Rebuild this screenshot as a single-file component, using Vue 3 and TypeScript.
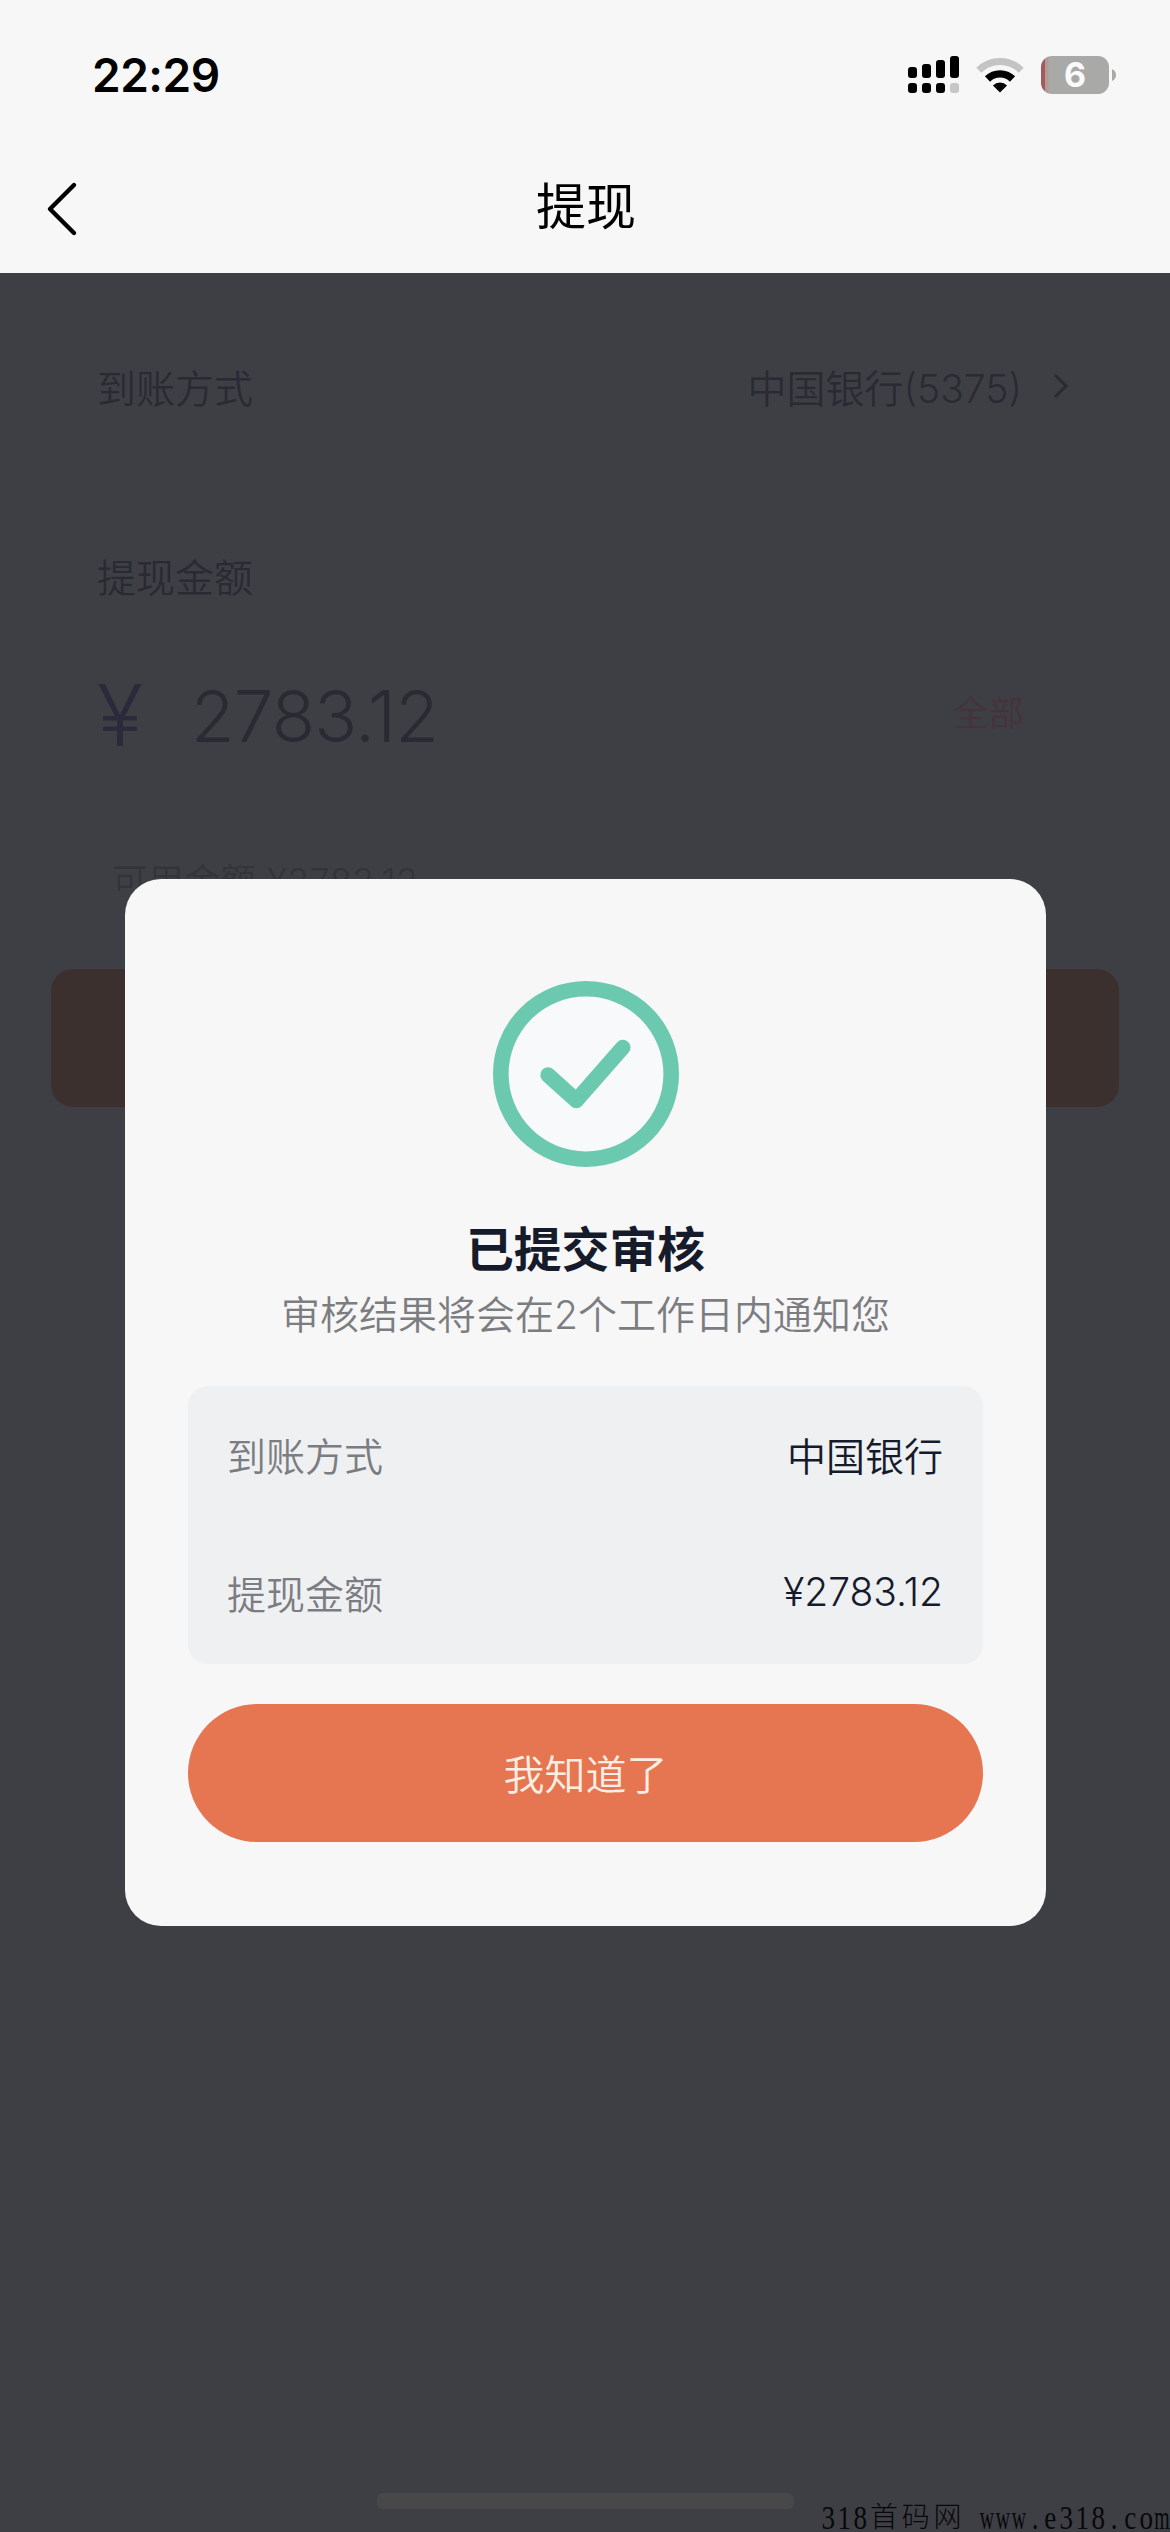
<script setup lang="ts">
interface DetailRow {
  label: string
  value: string
}

const amount = '2783.12'

const details: DetailRow[] = [
  { label: '到账方式', value: '中国银行' },
  { label: '提现金额', value: `¥${amount}` },
]

const signalBars = [
  { x: 0, y: 11, h: 11 },
  { x: 14, y: 8, h: 14 },
  { x: 28, y: 4, h: 18 },
  { x: 42, y: 0, h: 22 },
]

const watermark = [...'318首码网 www.e318.com'].map((ch) => ({
  ch: ch === ' ' ? '\u00a0' : ch,
  full: ch.charCodeAt(0) > 255,
  wide: ch === 'w' || ch === 'm',
}))
</script>

<template>
  <div class="screen">
    <header class="top">
      <div class="status">
        <span class="time">22:29</span>
        <div class="status-icons">
          <svg class="signal" width="51" height="37" viewBox="0 0 51 37">
            <rect v-for="b in signalBars" :key="b.x" :x="b.x" :y="b.y" width="9" :height="b.h" rx="3" />
            <rect
              v-for="b in signalBars"
              :key="'d' + b.x"
              :x="b.x"
              y="27"
              width="9"
              height="10"
              rx="3"
              :fill="b.x === 42 ? '#c6c6c6' : '#000'"
            />
          </svg>
          <svg class="wifi" width="48" height="36" viewBox="0 0 48 36">
            <path d="M2.8 13.2 A30 30 0 0 1 45.2 13.2" fill="none" stroke="#c4c4c4" stroke-width="7" />
            <path d="M11.5 22 A17.8 17.8 0 0 1 36.5 22" fill="none" stroke="#000" stroke-width="7.4" />
            <path d="M24 35.4 L16.9 28.4 A10 10 0 0 1 31.1 28.4 Z" />
          </svg>
          <div class="battery">
            <div class="cell"><span>6</span></div>
            <svg width="4" height="12" viewBox="0 0 4 12"><path d="M0 0 Q4 2 4 6 Q4 10 0 12 Z" fill="#a9a9a9" /></svg>
          </div>
        </div>
      </div>
      <nav class="nav">
        <svg class="back" width="32" height="56" viewBox="0 0 32 56">
          <path d="M28 4 L4 28 L28 52" fill="none" stroke="#000" stroke-width="4.4" stroke-linecap="round" stroke-linejoin="round" />
        </svg>
        <h1>提现</h1>
      </nav>
    </header>

    <main class="form">
      <div class="line method">
        <span>到账方式</span>
        <span class="bank">中国银行(5375)</span>
        <svg width="16" height="28" viewBox="0 0 16 28">
          <path d="M2 3 L13 14 L2 25" fill="none" stroke="#2a2a34" stroke-width="3" />
        </svg>
      </div>
      <div class="line caption">提现金额</div>
      <div class="line sum">
        <span class="yen">¥</span>
        <span class="figure">{{ amount }}</span>
        <span class="all">全部</span>
      </div>
      <div class="line available">可用金额 ¥2783.12</div>
      <div class="submit"></div>
    </main>

    <div class="home-bar"></div>

    <section class="dialog">
      <svg class="done" width="186" height="186" viewBox="0 0 186 186">
        <circle cx="93" cy="93" r="85.2" fill="#f8f9fa" stroke="#6bc9b0" stroke-width="15.6" />
        <path d="M55 94 L83.3 119.5 L129.8 66.5" fill="none" stroke="#6bc9b0" stroke-width="15.4" stroke-linecap="round" stroke-linejoin="round" />
      </svg>
      <h2>已提交审核</h2>
      <p class="hint">审核结果将会在2个工作日内通知您</p>
      <div class="panel">
        <div v-for="row in details" :key="row.label" class="row">
          <span class="label">{{ row.label }}</span>
          <span class="value">{{ row.value }}</span>
        </div>
      </div>
      <button type="button">我知道了</button>
    </section>

    <div class="watermark">
      <span v-for="(c, i) in watermark" :key="i" :class="{ full: c.full, wide: c.wide }"><i>{{ c.ch }}</i></span>
    </div>
  </div>
</template>

<style>
body {
  margin: 0;
  background: #3e3f44;
}
</style>

<style scoped>
.screen {
  position: relative;
  display: flex;
  flex-direction: column;
  width: 1170px;
  height: 2532px;
  overflow: hidden;
  background: #3e3f44;
  font-family: Inter, "Noto Sans CJK SC", sans-serif;
  font-size: 39px;
  font-weight: 350;
}

.top {
  height: 273px;
  background: #f7f7f7;
  color: #000;
}

.status {
  display: flex;
  align-items: center;
  justify-content: space-between;
  box-sizing: border-box;
  height: 141px;
  padding: 8px 54px 0 92px;
}

.time {
  font-size: 46px;
  font-weight: 600;
  line-height: 58px;
  letter-spacing: -0.5px;
}

.status-icons {
  display: flex;
  align-items: center;
}

.wifi {
  margin-left: 17px;
}

.battery {
  display: flex;
  align-items: center;
  gap: 3px;
  margin-left: 17px;
}

.cell {
  width: 68px;
  height: 38px;
  border-radius: 11px;
  background: linear-gradient(90deg, #a35a5c 0 4px, #b39a98 4px 7px, #a9aaa7 8px);
  color: #fafafa;
  font-size: 34px;
  font-weight: 700;
  line-height: 38px;
  text-align: center;
}

.nav {
  display: grid;
  grid-template-columns: 120px 1fr 120px;
  align-items: center;
  height: 132px;
}

.back {
  margin: 3px 0 0 46px;
}

h1 {
  margin: 0;
  padding-left: 2px;
  font-size: 50px;
  font-weight: 400;
  line-height: 60px;
  text-align: center;
}

.form {
  display: flex;
  flex-direction: column;
  color: #2a2a35;
}

.line {
  display: flex;
  align-items: center;
  padding: 0 97px;
  white-space: nowrap;
}

.method {
  height: 60px;
  margin-top: 83px;
}

.bank {
  margin-left: auto;
}

.method svg {
  margin: 0 4px 0 31px;
}

.caption {
  height: 60px;
  margin-top: 129px;
}

.sum {
  height: 80px;
  margin-top: 71px;
}

.yen {
  width: 94px;
  color: #2a2a3a;
  font-size: 85px;
  line-height: 80px;
  letter-spacing: 0;
}

.figure {
  font-size: 71px;
  letter-spacing: -0.8px;
}

.all {
  margin: -12px 49px 0 auto;
  color: #46333a;
  font-size: 35.5px;
}

.available {
  height: 40px;
  margin-top: 102px;
  padding-left: 112px;
  color: #33333a;
  font-size: 35.5px;
  letter-spacing: 0.7px;
}

.submit {
  height: 138px;
  margin: 71px 51px 0;
  border-radius: 22px;
  background: #3c302f;
}

.home-bar {
  width: 417px;
  height: 16px;
  margin: auto auto 23px;
  border-radius: 6px;
  background: #48484b;
}

.dialog {
  position: absolute;
  top: 879px;
  left: 125px;
  display: flex;
  flex-direction: column;
  box-sizing: border-box;
  width: 921px;
  height: 1047px;
  padding: 102px 63px 0;
  border-radius: 36px;
  background: #f7f7f7;
}

.done {
  align-self: center;
}

h2 {
  margin: 53px 0 0;
  color: #161b2c;
  font-size: 47.8px;
  font-weight: 600;
  line-height: 60px;
  text-align: center;
}

.hint {
  margin: 10px 0 0;
  color: #7c7d81;
  line-height: 50px;
  text-align: center;
  white-space: nowrap;
}

.panel {
  height: 278px;
  margin-top: 46px;
  border-radius: 20px;
  background: #eff0f2;
}

.row {
  display: flex;
  align-items: center;
  justify-content: space-between;
  height: 138px;
  padding: 0 40px 0 39px;
}

.row span {
  margin-top: -3px;
}

.label {
  color: #7c7d82;
}

.value {
  color: #161b2c;
}

button {
  height: 138px;
  margin: 40px 0 0;
  padding: 0 0 3px;
  border: 0;
  border-radius: 69px;
  background: #e67652;
  color: #fdeee4;
  font: inherit;
  font-size: 41px;
}

.watermark {
  position: absolute;
  right: 0;
  bottom: 0;
  display: flex;
  color: #08080a;
  font-family: "Liberation Serif", "Noto Sans CJK SC", serif;
  font-size: 33px;
  line-height: 28px;
}

.watermark span {
  display: flex;
  justify-content: center;
  width: 15.9px;
}

.watermark i {
  font-style: normal;
  transform: scaleX(0.82);
}

.watermark .full {
  width: 31.8px;
  font-size: 28px;
  font-weight: 300;
}

.watermark .full i {
  transform: none;
}

.watermark .wide i {
  transform: scaleX(0.6);
}
</style>
